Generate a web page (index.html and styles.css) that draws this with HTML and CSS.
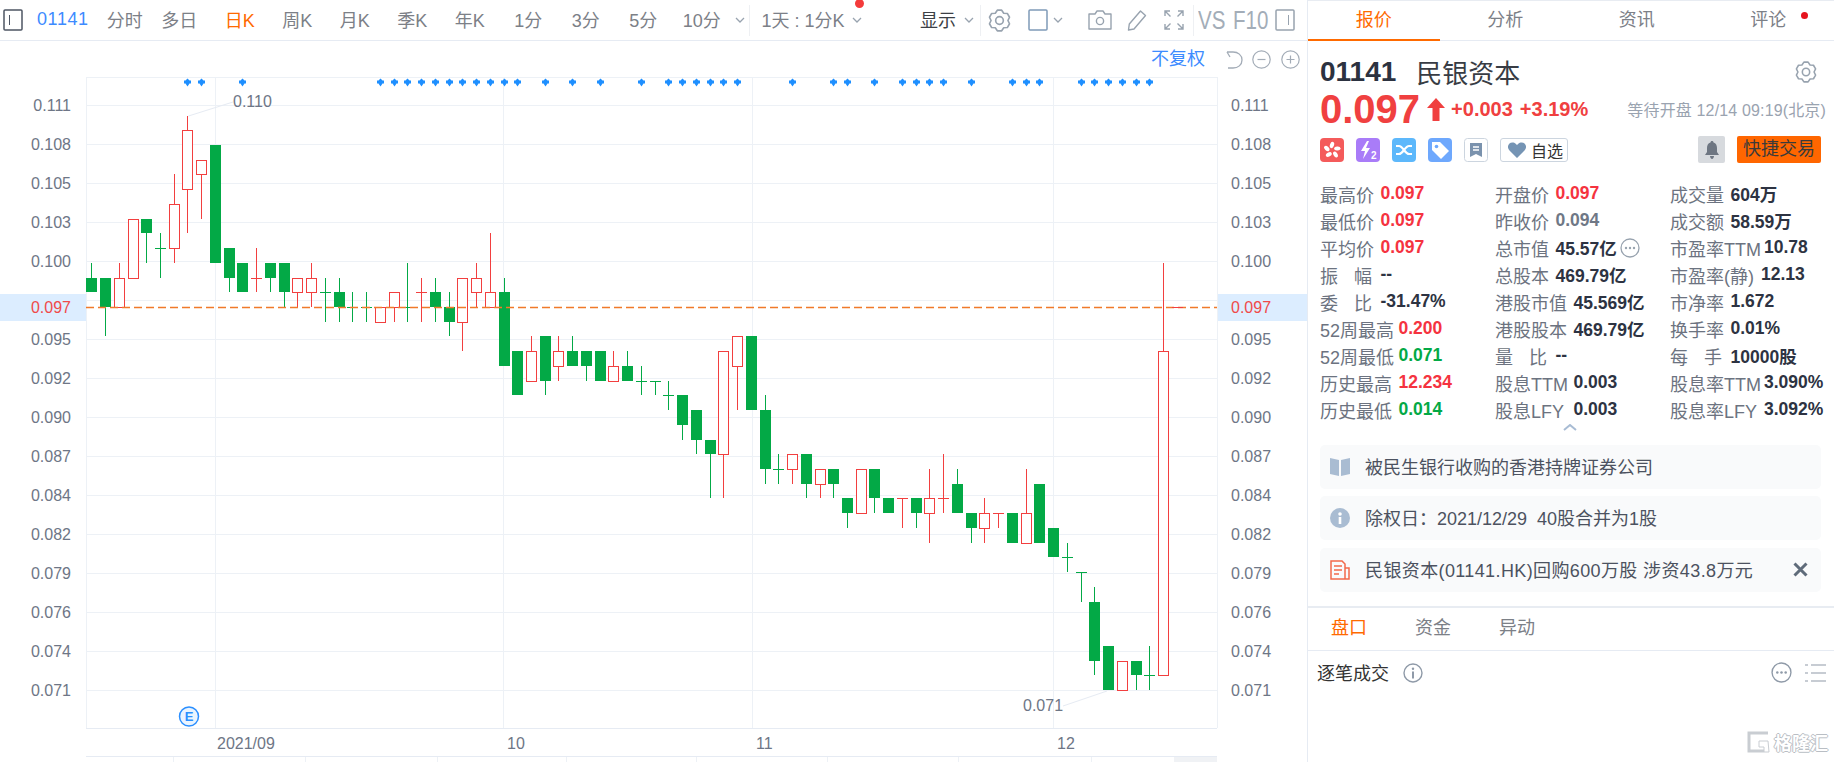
FILE: index.html
```html
<!DOCTYPE html>
<html lang="zh">
<head>
  <meta charset="UTF-8">
  <title>01141 民银资本</title>
  <link rel="stylesheet" href="styles.css">
</head>
<body>
  <svg class="defs" width="0" height="0">
    <symbol id="gear" viewBox="0 0 24 24">
      <polygon points="9.71,1.24 14.29,1.24 16.4,4.38 20.17,4.64 22.46,8.6 20.8,12 22.46,15.4 20.17,19.36 16.4,19.62 14.29,22.76 9.71,22.76 7.6,19.62 3.83,19.36 1.54,15.4 3.2,12 1.54,8.6 3.83,4.64 7.6,4.38" fill="none" stroke="currentColor" stroke-width="1.7" stroke-linejoin="round"/>
      <circle cx="12" cy="12" r="4" fill="none" stroke="currentColor" stroke-width="1.7"/>
    </symbol>
    <symbol id="chev" viewBox="0 0 10 6">
      <path d="M1 1l4 4 4-4" fill="none" stroke="currentColor" stroke-width="1.3"/>
    </symbol>
    <symbol id="dots" viewBox="0 0 20 20">
      <circle cx="10" cy="10" r="9" fill="none" stroke="currentColor" stroke-width="1.3"/>
      <circle cx="6" cy="10" r="1.2" fill="currentColor"/>
      <circle cx="10" cy="10" r="1.2" fill="currentColor"/>
      <circle cx="14" cy="10" r="1.2" fill="currentColor"/>
    </symbol>
  </svg>

  <div class="left">
    <div class="toolbar">
      <svg class="panel-ico" width="20" height="22" viewBox="0 0 20 22"><rect x="1" y="1" width="18" height="20" rx="1" fill="none" stroke="#4d5563" stroke-width="1.5"/><path d="M6.5 6v10" stroke="#4d5563"/></svg>
      <span class="code">01141</span>
      <div class="periods">
        <span class="period tight">分时</span>
        <span class="period">多日</span>
        <span class="period active">日K</span>
        <span class="period">周K</span>
        <span class="period">月K</span>
        <span class="period">季K</span>
        <span class="period">年K</span>
        <span class="period num">1分</span>
        <span class="period num">3分</span>
        <span class="period num">5分</span>
        <span class="period last-period">10分</span>
      </div>
      <svg class="chev chev-a"><use href="#chev"/></svg>
      <i class="sep sep-a"></i>
      <span class="period cycle">1天 : 1分K<b class="dot"></b></span>
      <svg class="chev chev-b"><use href="#chev"/></svg>
      <span class="show">显示</span>
      <svg class="chev chev-c"><use href="#chev"/></svg>
      <i class="sep sep-c"></i>
      <svg class="ico gear-ico"><use href="#gear"/></svg>
      <svg class="ico square-ico" width="20" height="22" viewBox="0 0 20 22"><rect x="1" y="1" width="18" height="20" rx="1" fill="none" stroke="#7f9ab8" stroke-width="1.5"/></svg>
      <svg class="chev chev-d"><use href="#chev"/></svg>
      <svg class="ico camera-ico" width="24" height="22" viewBox="0 0 24 22"><path d="M1 5h6l2-3h6l2 3h6v15H1z" fill="none" stroke="currentColor" stroke-width="1.4" stroke-linejoin="round"/><circle cx="12" cy="12" r="3.6" fill="none" stroke="currentColor" stroke-width="1.4"/></svg>
      <svg class="ico pencil-ico" width="20" height="22" viewBox="0 0 20 22"><path d="M13.5 2l5 4.5L7 20l-5.500 1 .8-6z" fill="none" stroke="currentColor" stroke-width="1.4" stroke-linejoin="round"/></svg>
      <svg class="ico expand-ico" width="22" height="22" viewBox="0 0 22 22"><path d="M2 7V2h5M2 2l5.500 5.500M15 2h5v5M20 2l-5.500 5.500M2 15v5h5M2 20l5.500-5.500M15 20h5v-5M20 20l-5.500-5.500" fill="none" stroke="currentColor" stroke-width="1.4"/></svg>
      <i class="sep sep-e"></i>
      <span class="tool-text vs">VS</span>
      <span class="tool-text f10">F10</span>
      <svg class="ico right-panel-ico" width="20" height="22" viewBox="0 0 20 22"><rect x="1" y="1" width="18" height="20" rx="1" fill="none" stroke="currentColor" stroke-width="1.5"/><path d="M13.500 6v10" stroke="currentColor"/></svg>
    </div>
    <div class="subbar">
      <span class="adjust">不复权</span>
      <svg class="sub-ico undo" width="18" height="18" viewBox="0 0 18 18"><path d="M1 1h6c5 0 9 3 9 8s-4 8-9 8H2M1 1l3 5" fill="none" stroke="currentColor" stroke-width="1.3"/></svg>
      <svg class="sub-ico zoom-out" width="19" height="19" viewBox="0 0 19 19"><circle cx="9.500" cy="9.500" r="8.700" fill="none" stroke="currentColor" stroke-width="1.2"/><path d="M5.500 9.500h8" stroke="currentColor" stroke-width="1.200"/></svg>
      <svg class="sub-ico zoom-in" width="19" height="19" viewBox="0 0 19 19"><circle cx="9.500" cy="9.500" r="8.700" fill="none" stroke="currentColor" stroke-width="1.2"/><path d="M5.500 9.500h8M9.500 5.500v8" stroke="currentColor" stroke-width="1.200"/></svg>
    </div>
    <svg id="chart" class="chart" width="1307" height="685" viewBox="0 77 1307 685"></svg>
  </div>

  <div class="right">
    <div class="tabs">
      <span class="tab active">报价</span>
      <span class="tab">分析</span>
      <span class="tab">资讯</span>
      <span class="tab">评论<b class="tab-dot"></b></span>
    </div>

    <div class="quote">
      <div class="name-row">
        <span class="q-code">01141</span>
        <span class="q-name">民银资本</span>
        <svg class="q-gear"><use href="#gear"/></svg>
      </div>
      <div class="price-row">
        <span class="price">0.097</span>
        <svg class="arrow" width="18" height="23" viewBox="0 0 18 23"><path d="M9 0l9 10h-5.500v13h-7V10H0z" fill="#f04040"/></svg>
        <span class="change">+0.003</span>
        <span class="change pct">+3.19%</span>
        <span class="status">等待开盘 12/14 09:19(北京)</span>
      </div>
      <div class="tools-row">
        <svg class="badge" viewBox="0 0 24 24"><rect width="24" height="24" rx="4" fill="#f45b5b"/><g fill="#fff"><ellipse cx="12" cy="7" rx="2" ry="3.200" transform="rotate(20 12 7)"/><ellipse cx="17.300" cy="10.500" rx="2" ry="3.200" transform="rotate(85 17.300 10.500)"/><ellipse cx="15.500" cy="16.500" rx="2" ry="3.200" transform="rotate(150 15.500 16.500)"/><ellipse cx="8.800" cy="16.500" rx="2" ry="3.200" transform="rotate(60 8.800 16.500)"/><ellipse cx="6.800" cy="10.500" rx="2" ry="3.200" transform="rotate(-45 6.800 10.500)"/></g></svg>
        <svg class="badge" viewBox="0 0 24 24"><rect width="24" height="24" rx="4" fill="#a97cf8"/><path d="M11 3L5 13h4l-2 8 7-11h-4l3-7z" fill="#fff"/><text x="15" y="21" class="badge-two">2</text></svg>
        <svg class="badge" viewBox="0 0 24 24"><rect width="24" height="24" rx="4" fill="#5db8fb"/><path d="M4 8h3c4 0 6 8 10 8h3M4 16h3c4 0 6-8 10-8h3" fill="none" stroke="#fff" stroke-width="2.200"/></svg>
        <svg class="badge" viewBox="0 0 24 24"><rect width="24" height="24" rx="4" fill="#6ea8fd"/><path d="M4 4h8l9 9-8 8-9-9z" fill="#fff"/><circle cx="8.500" cy="8.500" r="1.800" fill="#6ea8fd"/></svg>
        <svg class="badge" viewBox="0 0 24 24"><rect x=".5" y=".5" width="23" height="23" rx="3" fill="#fff" stroke="#ccd5df"/><path d="M6 5h12v14l-6-3-6 3z" fill="#7a92ad"/><path d="M9 9h6M9 12h6" stroke="#fff" stroke-width="1.400"/></svg>
        <span class="fav"><svg width="18" height="16" viewBox="0 0 18 16"><path d="M9 16L1.500 8.500C-.500 6.500-.500 3.500 1.200 1.700 3 0 6 0 7.700 1.700L9 3l1.300-1.300C12 0 15 0 16.800 1.700c1.700 1.800 1.700 4.800-.300 6.800z" fill="#7594b4"/></svg>自选</span>
        <span class="bell"><svg width="14" height="18" viewBox="0 0 14 18"><path d="M7 0c1 0 1.500.7 1.500 1.500C11 2.300 12 4.500 12 7v4l2 3H0l2-3V7c0-2.500 1-4.700 3.500-5.500C5.500.7 6 0 7 0zM5 15h4c0 1.500-1 3-2 3s-2-1.500-2-3z" fill="#6e7682"/></svg></span>
        <span class="trade">快捷交易</span>
      </div>

      <div class="stats">
        <div class="stat"><span class="lbl">最高价</span><span class="val up">0.097</span></div>
        <div class="stat"><span class="lbl">开盘价</span><span class="val up">0.097</span></div>
        <div class="stat"><span class="lbl">成交量</span><span class="val">604万</span></div>

        <div class="stat"><span class="lbl">最低价</span><span class="val up">0.097</span></div>
        <div class="stat"><span class="lbl">昨收价</span><span class="val flat">0.094</span></div>
        <div class="stat"><span class="lbl">成交额</span><span class="val">58.59万</span></div>

        <div class="stat"><span class="lbl">平均价</span><span class="val up">0.097</span></div>
        <div class="stat"><span class="lbl">总市值</span><span class="val">45.57亿</span><svg class="more"><use href="#dots"/></svg></div>
        <div class="stat"><span class="lbl long">市盈率TTM</span><span class="val">10.78</span></div>

        <div class="stat"><span class="lbl spread">振 幅</span><span class="val">--</span></div>
        <div class="stat"><span class="lbl">总股本</span><span class="val">469.79亿</span></div>
        <div class="stat"><span class="lbl long-b">市盈率(静)</span><span class="val">12.13</span></div>

        <div class="stat"><span class="lbl spread">委 比</span><span class="val">-31.47%</span></div>
        <div class="stat"><span class="lbl mid">港股市值</span><span class="val">45.569亿</span></div>
        <div class="stat"><span class="lbl">市净率</span><span class="val">1.672</span></div>

        <div class="stat"><span class="lbl mid">52周最高</span><span class="val up">0.200</span></div>
        <div class="stat"><span class="lbl mid">港股股本</span><span class="val">469.79亿</span></div>
        <div class="stat"><span class="lbl">换手率</span><span class="val">0.01%</span></div>

        <div class="stat"><span class="lbl mid">52周最低</span><span class="val down">0.071</span></div>
        <div class="stat"><span class="lbl spread">量 比</span><span class="val">--</span></div>
        <div class="stat"><span class="lbl spread">每 手</span><span class="val">10000股</span></div>

        <div class="stat"><span class="lbl mid">历史最高</span><span class="val up">12.234</span></div>
        <div class="stat"><span class="lbl mid">股息TTM</span><span class="val">0.003</span></div>
        <div class="stat"><span class="lbl long">股息率TTM</span><span class="val">3.090%</span></div>

        <div class="stat"><span class="lbl mid">历史最低</span><span class="val down">0.014</span></div>
        <div class="stat"><span class="lbl mid">股息LFY</span><span class="val">0.003</span></div>
        <div class="stat"><span class="lbl long">股息率LFY</span><span class="val">3.092%</span></div>
      </div>
      <svg class="fold" width="14" height="7" viewBox="0 0 14 7"><path d="M1 6l6-5 6 5" fill="none" stroke="#a8bcd4" stroke-width="2"/></svg>

      <div class="notes">
        <div class="note">
          <svg width="20" height="20" viewBox="0 0 20 20"><path d="M0 1l9 2v16l-9-2zM20 1l-9 2v16l9-2z" fill="#a9bcd2"/></svg>
          <span>被民生银行收购的香港持牌证券公司</span>
        </div>
        <div class="note">
          <svg width="20" height="20" viewBox="0 0 20 20"><circle cx="10" cy="10" r="10" fill="#a9bcd2"/><circle cx="10" cy="6" r="1.800" fill="#fff"/><rect x="8.700" y="9" width="2.600" height="7" fill="#fff"/></svg>
          <span>除权日：2021/12/29&nbsp; 40股合并为1股</span>
        </div>
        <div class="note">
          <svg width="20" height="20" viewBox="0 0 20 20"><path d="M1 19V1h11l3 3v15zM15 8h4v11h-4" fill="none" stroke="#f2694b" stroke-width="1.500"/><path d="M4 6h8M4 10h8M4 14h5" stroke="#f2694b" stroke-width="1.500"/></svg>
          <span class="news">民银资本(01141.HK)回购600万股 涉资43.8万元</span>
          <svg class="close" width="15" height="15" viewBox="0 0 15 15"><path d="M1.500 1.500l12 12M13.500 1.500l-12 12" stroke="#5f6b7a" stroke-width="3"/></svg>
        </div>
      </div>
    </div>

    <div class="subtabs">
      <span class="subtab active">盘口</span>
      <span class="subtab">资金</span>
      <span class="subtab">异动</span>
    </div>
    <div class="ticks-row">
      <span class="ticks-title">逐笔成交</span>
      <svg class="ticks-info" width="20" height="20" viewBox="0 0 20 20"><circle cx="10" cy="10" r="9" fill="none" stroke="#8f9aa8" stroke-width="1.400"/><circle cx="10" cy="5.800" r="1.200" fill="#8f9aa8"/><rect x="9" y="8.500" width="2" height="7" fill="#8f9aa8"/></svg>
      <svg class="ticks-more"><use href="#dots"/></svg>
      <svg class="ticks-list" width="21" height="20" viewBox="0 0 21 20"><path d="M0 2h3M6 2h15M0 10h3M6 10h15M0 18h3M6 18h15" stroke="#8f9aa8" stroke-width="1.200"/></svg>
    </div>
    <div class="watermark">
      <svg width="24" height="22" viewBox="0 0 24 22"><path d="M21 2H2v18h15" fill="none" stroke="#c9cdd2" stroke-width="3"/><path d="M21 10h-9v6h5v5h5z" fill="#fff" stroke="#c9cdd2"/></svg>
      <span>格隆汇</span>
    </div>
  </div>

  <script>
    const NS = 'http://www.w3.org/2000/svg';
    const chart = document.getElementById('chart');
    const GREEN = '#03a946';
    const RED = '#f23f3f';

    // g/r, body top, body bottom, high, low (prices in 0.001)
    const candles = [
      ['g',99,98,100,98], ['g',99,97,99,95], ['r',99,97,100,97], ['r',103,99,103,99], ['g',103,102,103,100],
      ['g',101,101,102,99], ['r',104,101,106,100], ['r',109,105,110,102], ['r',107,106,107,103], ['g',108,100,108,100],
      ['g',101,99,101,98], ['g',100,98,100,98], ['r',99,99,101,98], ['g',100,99,100,98], ['g',100,98,100,97],
      ['r',99,98,99,97], ['r',99,98,100,97], ['g',98,98,99,96], ['g',98,97,99,96], ['g',97,97,98,96],
      ['g',97,97,98,96], ['r',97,96,97,96], ['r',98,97,98,96], ['g',97,97,100,96], ['r',98,98,99,96],
      ['g',98,97,99,96], ['g',97,96,98,95], ['r',99,96,99,94], ['r',99,98,100,97], ['r',98,97,102,97],
      ['g',98,93,99,93], ['g',94,91,94,91], ['r',94,92,95,92], ['g',95,92,95,91], ['r',94,93,95,92],
      ['g',94,93,95,93], ['g',94,93,94,92], ['g',94,92,94,92], ['r',93,92,94,92], ['g',93,92,94,92],
      ['g',92,92,93,91], ['g',92,92,92,91], ['g',91,91,92,90], ['g',91,89,91,88], ['g',90,88,90,87],
      ['g',88,87,88,84], ['r',94,87,94,84], ['r',95,93,95,90], ['g',95,90,95,90], ['g',90,86,91,85],
      ['g',86,86,87,85], ['r',87,86,87,85], ['g',87,85,87,84], ['r',86,85,86,84], ['g',86,85,86,84],
      ['g',84,83,84,82], ['r',86,83,86,83], ['g',86,84,86,83], ['g',84,83,84,83], ['r',84,84,84,82],
      ['g',84,83,84,82], ['r',84,83,86,81], ['r',84,84,87,83], ['g',85,83,86,83], ['g',83,82,83,81],
      ['r',83,82,84,81], ['r',83,83,83,82], ['g',83,81,83,81], ['r',83,81,86,81], ['g',85,81,85,81],
      ['g',82,80,82,80], ['g',80,80,81,79], ['g',79,79,79,77], ['g',77,73,78,72], ['g',74,71,74,71],
      ['r',73,71,73,71], ['g',73,72,73,71], ['g',72,72,74,71], ['r',94,72,100,72]
    ];

    // which candles carry a marker on the top row
    const markers = [7,8,11,21,22,23,24,25,26,27,28,29,30,31,33,35,37,40,42,43,44,45,46,47,51,54,55,57,59,60,61,62,64,67,68,69,72,73,74,75,76,77];

    const gridY = [105,144,183,222,261,300,339,378,417,456,495,534,573,612,651,690];
    const axis = [
      [105,'0.111'],[144,'0.108'],[183,'0.105'],[222,'0.103'],[261,'0.100'],[339,'0.095'],[378,'0.092'],[417,'0.090'],
      [456,'0.087'],[495,'0.084'],[534,'0.082'],[573,'0.079'],[612,'0.076'],[651,'0.074'],[690,'0.071']
    ];

    function add(tag, attrs, text) {
      const el = document.createElementNS(NS, tag);
      for (const k in attrs) el.setAttribute(k, attrs[k]);
      if (text) el.textContent = text;
      chart.appendChild(el);
      return el;
    }
    const priceY = p => Math.round(307 + (97 - p) * 14.73);
    const candleX = i => Math.round(91.3 + i * 13.74);
    const line = (x1, y1, x2, y2, cls) => add('line', { x1, y1, x2, y2, class: cls });

    // frame and grid
    gridY.forEach(y => line(86, y + .5, 1217, y + .5, 'grid'));
    [215, 503, 752, 1053].forEach(x => line(x + .5, 77, x + .5, 728, 'grid'));
    line(86, 77.5, 1217, 77.5, 'grid');
    line(86.5, 77, 86.5, 728, 'grid');
    line(1217.5, 77, 1217.5, 728, 'grid');
    line(86, 728.5, 1217, 728.5, 'frame');

    // current price bands
    add('rect', { x: 0, y: 294, width: 86, height: 27, class: 'band' });
    add('rect', { x: 1218, y: 294, width: 89, height: 27, class: 'band' });

    // axis labels
    axis.forEach(([y, t]) => {
      add('text', { x: 71, y: y + 6, class: 'axis end' }, t);
      add('text', { x: 1231, y: y + 6, class: 'axis' }, t);
    });
    add('text', { x: 71, y: 313, class: 'axis end now' }, '0.097');
    add('text', { x: 1231, y: 313, class: 'axis now' }, '0.097');

    // date labels
    [[217,'2021/09'],[507,'10'],[756,'11'],[1057,'12']].forEach(([x, t]) => add('text', { x, y: 749, class: 'axis' }, t));

    // markers
    markers.forEach(i => {
      const x = candleX(i) + .5;
      add('path', { d: `M${x} 78.500l2 2h1.500v3l-1.500 0-2 3-2-3h-1.500v-3h1.500z`, class: 'marker' });
    });

    // candles
    candles.forEach(([c, top, bottom, high, low], i) => {
      const x = candleX(i);
      const color = c === 'g' ? GREEN : RED;
      const t = priceY(top), b = priceY(bottom);
      line(x + .5, priceY(high), x + .5, priceY(low), c === 'g' ? 'wick-g' : 'wick-r');
      if (top === bottom) {
        line(x - 5, t + .5, x + 6, t + .5, c === 'g' ? 'wick-g' : 'wick-r');
      } else if (c === 'g') {
        add('rect', { x: x - 5, y: t, width: 11, height: b - t, fill: color, class: 'body' });
      } else {
        add('rect', { x: x - 4.500, y: t + .5, width: 10, height: b - t, fill: '#fff', stroke: color, class: 'body' });
      }
    });

    // last price line
    add('line', { x1: 86, y1: 307.5, x2: 1217, y2: 307.5, class: 'last' });
    line(1172, 307.5, 1183, 307.5, 'wick-r');

    // high and low callouts
    line(188.5, 116, 233, 102, 'leader');
    add('text', { x: 233, y: 107, class: 'axis' }, '0.110');
    line(1107, 691, 1063, 706, 'leader');
    add('text', { x: 1023, y: 711, class: 'axis' }, '0.071');

    // event marker
    add('circle', { cx: 189, cy: 716.5, r: 9.5, class: 'event' });
    add('text', { x: 189, y: 721, class: 'event-text' }, 'E');

    // navigator strip
    line(86, 756.5, 1217, 756.5, 'frame');
    [173, 305, 437, 566, 696, 827, 958, 1091].forEach(x => line(x + .5, 757, x + .5, 762, 'grid'));
    add('rect', { x: 1174, y: 757, width: 43, height: 5, class: 'nav-end' });
  </script>
</body>
</html>
```

FILE: styles.css
```css
* {
  box-sizing: border-box;
}
html, body {
  margin: 0;
  height: 762px;
  overflow: hidden;
}
body {
  display: flex;
  width: 1834px;
  font-family: "Liberation Sans", "Noto Sans CJK SC", sans-serif;
  background-color: #fff;
  color: #333;
}
.defs {
  position: absolute;
}

/* left side */
.left {
  width: 1307px;
  flex: none;
}
.toolbar {
  display: flex;
  align-items: center;
  height: 41px;
  padding-left: 3px;
  border-bottom: 1px solid #e6ebf3;
  font-size: 18px;
  color: #7c8087;
}
.code {
  margin-left: 14px;
  margin-bottom: 2px;
  color: #3d8bff;
  letter-spacing: .6px;
}
.panel-ico {
  flex: none;
}
.periods {
  display: flex;
  gap: 27.5px;
  margin-left: 18px;
  margin-bottom: 2px;
}
.period {
  white-space: nowrap;
}
.period.tight {
  margin-right: -9px;
}
.period.active {
  color: #ff6a00;
}
.period.num {
  margin-left: 2px;
}
.period.last-period {
  margin-left: -2px;
}
.cycle {
  position: relative;
  margin-left: 11.5px;
  margin-bottom: 2px;
}
.dot {
  position: absolute;
  left: 94px;
  top: -7px;
  width: 9px;
  height: 9px;
  border-radius: 50%;
  background-color: #f43b3b;
}
.chev {
  flex: none;
  width: 10px;
  height: 6px;
  color: #98a3af;
}
.chev-a {
  margin-left: 14px;
}
.sep {
  flex: none;
  width: 1px;
  height: 31px;
  background-color: #eef0f3;
}
.sep-a {
  margin-left: 4px;
}
.chev-b {
  margin-left: 7.5px;
}
.show {
  margin-left: 58px;
  margin-bottom: 2px;
  color: #3c3f45;
}
.chev-c {
  margin-left: 8px;
}
.sep-c {
  margin-left: 6px;
}
.ico {
  flex: none;
  color: #98a3af;
}
.gear-ico {
  width: 23px;
  height: 23px;
  margin-left: 7px;
}
.square-ico {
  margin-left: 17px;
}
.chev-d {
  margin-left: 5px;
}
.camera-ico {
  margin-left: 25px;
}
.pencil-ico {
  margin-left: 15px;
}
.expand-ico {
  margin-left: 16px;
}
.sep-e {
  margin-left: 8px;
}
.tool-text {
  color: #a3adb8;
  font-size: 25px;
  line-height: 1;
  transform: scaleX(.82);
  transform-origin: left center;
}
.vs {
  margin-left: 4px;
  width: 27px;
}
.f10 {
  margin-left: 8px;
  width: 33px;
}
.right-panel-ico {
  margin-left: 9px;
}
.subbar {
  display: flex;
  align-items: center;
  height: 36px;
  padding-top: 1px;
  color: #a3acb7;
}
.adjust {
  margin-left: 1151px;
  margin-bottom: 5px;
  font-size: 18px;
  color: #3d8bff;
  white-space: nowrap;
}
.sub-ico {
  flex: none;
}
.undo {
  margin-left: 21px;
}
.zoom-out {
  margin-left: 8px;
}
.zoom-in {
  margin-left: 10px;
}
.chart {
  display: block;
}

/* chart parts, the svg is filled from the script */
.grid {
  stroke: #edf1f6;
  stroke-width: 1;
}
.frame {
  stroke: #e6ebf3;
  stroke-width: 1;
}
.band {
  fill: #dcedff;
}
.axis {
  font-size: 16px;
  fill: #6e7686;
}
.axis.end {
  text-anchor: end;
}
.axis.now {
  fill: #f04a4a;
}
.marker {
  fill: #1e8fff;
}
.wick-g, .wick-r {
  stroke-width: 1;
  shape-rendering: crispEdges;
}
.wick-g {
  stroke: #03a946;
}
.wick-r {
  stroke: #f23f3f;
}
.body {
  shape-rendering: crispEdges;
}
.last {
  stroke: #f07a2a;
  stroke-width: 1.6;
  stroke-dasharray: 8 4;
}
.leader {
  stroke: #e6ebf3;
  stroke-width: 1;
}
.event {
  fill: #eaf4ff;
  stroke: #2b8fff;
  stroke-width: 1.5;
}
.event-text {
  font-size: 13px;
  font-weight: bold;
  fill: #2b8fff;
  text-anchor: middle;
}
.nav-end {
  fill: #f0f2f5;
}

/* right side */
.right {
  position: relative;
  width: 527px;
  flex: none;
  border-left: 1px solid #e6ebf3;
}
.tabs {
  display: flex;
  height: 41px;
  border-top: 1px solid #e8ecf2;
  border-bottom: 1px solid #e6ebf3;
}
.tab {
  position: relative;
  flex: 1;
  text-align: center;
  font-size: 18px;
  line-height: 38px;
  color: #7c8087;
}
.tab.active {
  margin-bottom: -1px;
  border-bottom: 2px solid #ff6a00;
  color: #ff6a00;
}
.tab-dot {
  position: absolute;
  left: 98px;
  top: 11px;
  width: 7px;
  height: 7px;
  border-radius: 50%;
  background-color: #e6141e;
}
.quote {
  padding: 15px 13px 14px 12px;
  border-bottom: 2px solid #e8ecf2;
  margin-bottom: 0;
}
.name-row {
  display: flex;
  align-items: center;
  height: 32px;
  margin-bottom: 1px;
}
.q-code {
  font-size: 28px;
  font-weight: bold;
  color: #2c3240;
}
.q-name {
  margin-left: 20px;
  margin-bottom: 2px;
  font-size: 26px;
  color: #383c44;
}
.q-gear {
  width: 22px;
  height: 22px;
  margin-left: auto;
  margin-right: 4px;
  color: #98a3af;
}
.price-row {
  display: flex;
  align-items: center;
  height: 40px;
}
.price {
  font-size: 40px;
  font-weight: bold;
  color: #f04040;
}
.arrow {
  margin-left: 7px;
  flex: none;
}
.change {
  margin-left: 6px;
  font-size: 20px;
  font-weight: bold;
  color: #f04040;
}
.change.pct {
  margin-left: 7px;
}
.status {
  margin-left: auto;
  margin-right: -5px;
  font-size: 16px;
  letter-spacing: .15px;
  color: #9aa3b0;
  white-space: nowrap;
}
.tools-row {
  display: flex;
  align-items: center;
  gap: 12px;
  height: 27px;
  margin-top: 7px;
}
.badge {
  width: 24px;
  height: 24px;
  flex: none;
}
.badge-two {
  font-size: 10px;
  font-weight: bold;
  fill: #fff;
}
.fav {
  display: flex;
  align-items: center;
  flex: none;
  gap: 5px;
  width: 68px;
  height: 24px;
  padding-left: 7px;
  border: 1px solid #ccd5df;
  border-radius: 3px;
  font-size: 16px;
  color: #333;
}
.bell {
  display: flex;
  align-items: center;
  justify-content: center;
  width: 27px;
  height: 27px;
  margin-left: auto;
  background-color: #d7dade;
  border-radius: 2px;
}
.trade {
  width: 84px;
  height: 27px;
  background-color: #ff6600;
  border-radius: 2px;
  font-size: 18px;
  line-height: 27px;
  text-align: center;
  color: #3a3a3a;
}
.stats {
  display: grid;
  grid-template-columns: 175px 175px 1fr;
  grid-auto-rows: 27px;
  margin-top: 17px;
}
.stat {
  display: flex;
  align-items: center;
  white-space: nowrap;
}
.lbl {
  flex: none;
  width: 60.5px;
  font-size: 18px;
  color: #6c7380;
}
.lbl.mid {
  width: 78.500px;
}
.lbl.long {
  width: 94px;
}
.lbl.long-b {
  width: 91px;
}
.lbl.spread {
  padding-right: 8.5px;
  text-align-last: justify;
}
.val {
  font-size: 17.5px;
  font-weight: bold;
  color: #2d3342;
}
.val.up {
  color: #f5333f;
}
.val.down {
  color: #03a946;
}
.val.flat {
  color: #6f7886;
}
.more {
  width: 20px;
  height: 20px;
  margin-left: 3px;
  color: #98a3af;
}
.fold {
  display: block;
  margin: 1px 0 14px 243px;
}
.notes {
  display: flex;
  flex-direction: column;
  gap: 7.3px;
}
.note {
  display: flex;
  align-items: center;
  gap: 15px;
  height: 44px;
  padding-left: 10px;
  border-radius: 5px;
  background-color: #f9fafb;
  font-size: 18px;
  color: #4c5260;
}
.note span {
  margin-bottom: 2px;
}
.note svg {
  flex: none;
}
.news {
  letter-spacing: .38px;
}
.note .close {
  margin-left: auto;
  margin-right: 13px;
}
.subtabs {
  display: flex;
  height: 43px;
  padding-left: 23px;
  gap: 48px;
  border-bottom: 1px solid #e6ebf3;
  font-size: 18px;
  line-height: 41px;
  color: #7c8087;
}
.subtab.active {
  color: #ff6a00;
}
.ticks-row {
  display: flex;
  align-items: center;
  height: 44px;
  padding-left: 9px;
}
.ticks-title {
  margin-bottom: 2px;
  font-size: 18px;
  color: #333;
}
.ticks-info {
  margin-left: 14px;
}
.ticks-more {
  width: 21px;
  height: 21px;
  margin-left: auto;
  color: #8f9aa8;
}
.ticks-list {
  margin-left: 13px;
  margin-right: 8px;
}
.watermark {
  position: absolute;
  right: 6px;
  bottom: 7px;
  display: flex;
  align-items: center;
  gap: 3px;
  font-size: 18px;
  font-weight: bold;
  color: #fff;
  text-shadow: -1px 0 #b9bec4, 1px 0 #b9bec4, 0 -1px #b9bec4, 0 1px #b9bec4;
}
```
